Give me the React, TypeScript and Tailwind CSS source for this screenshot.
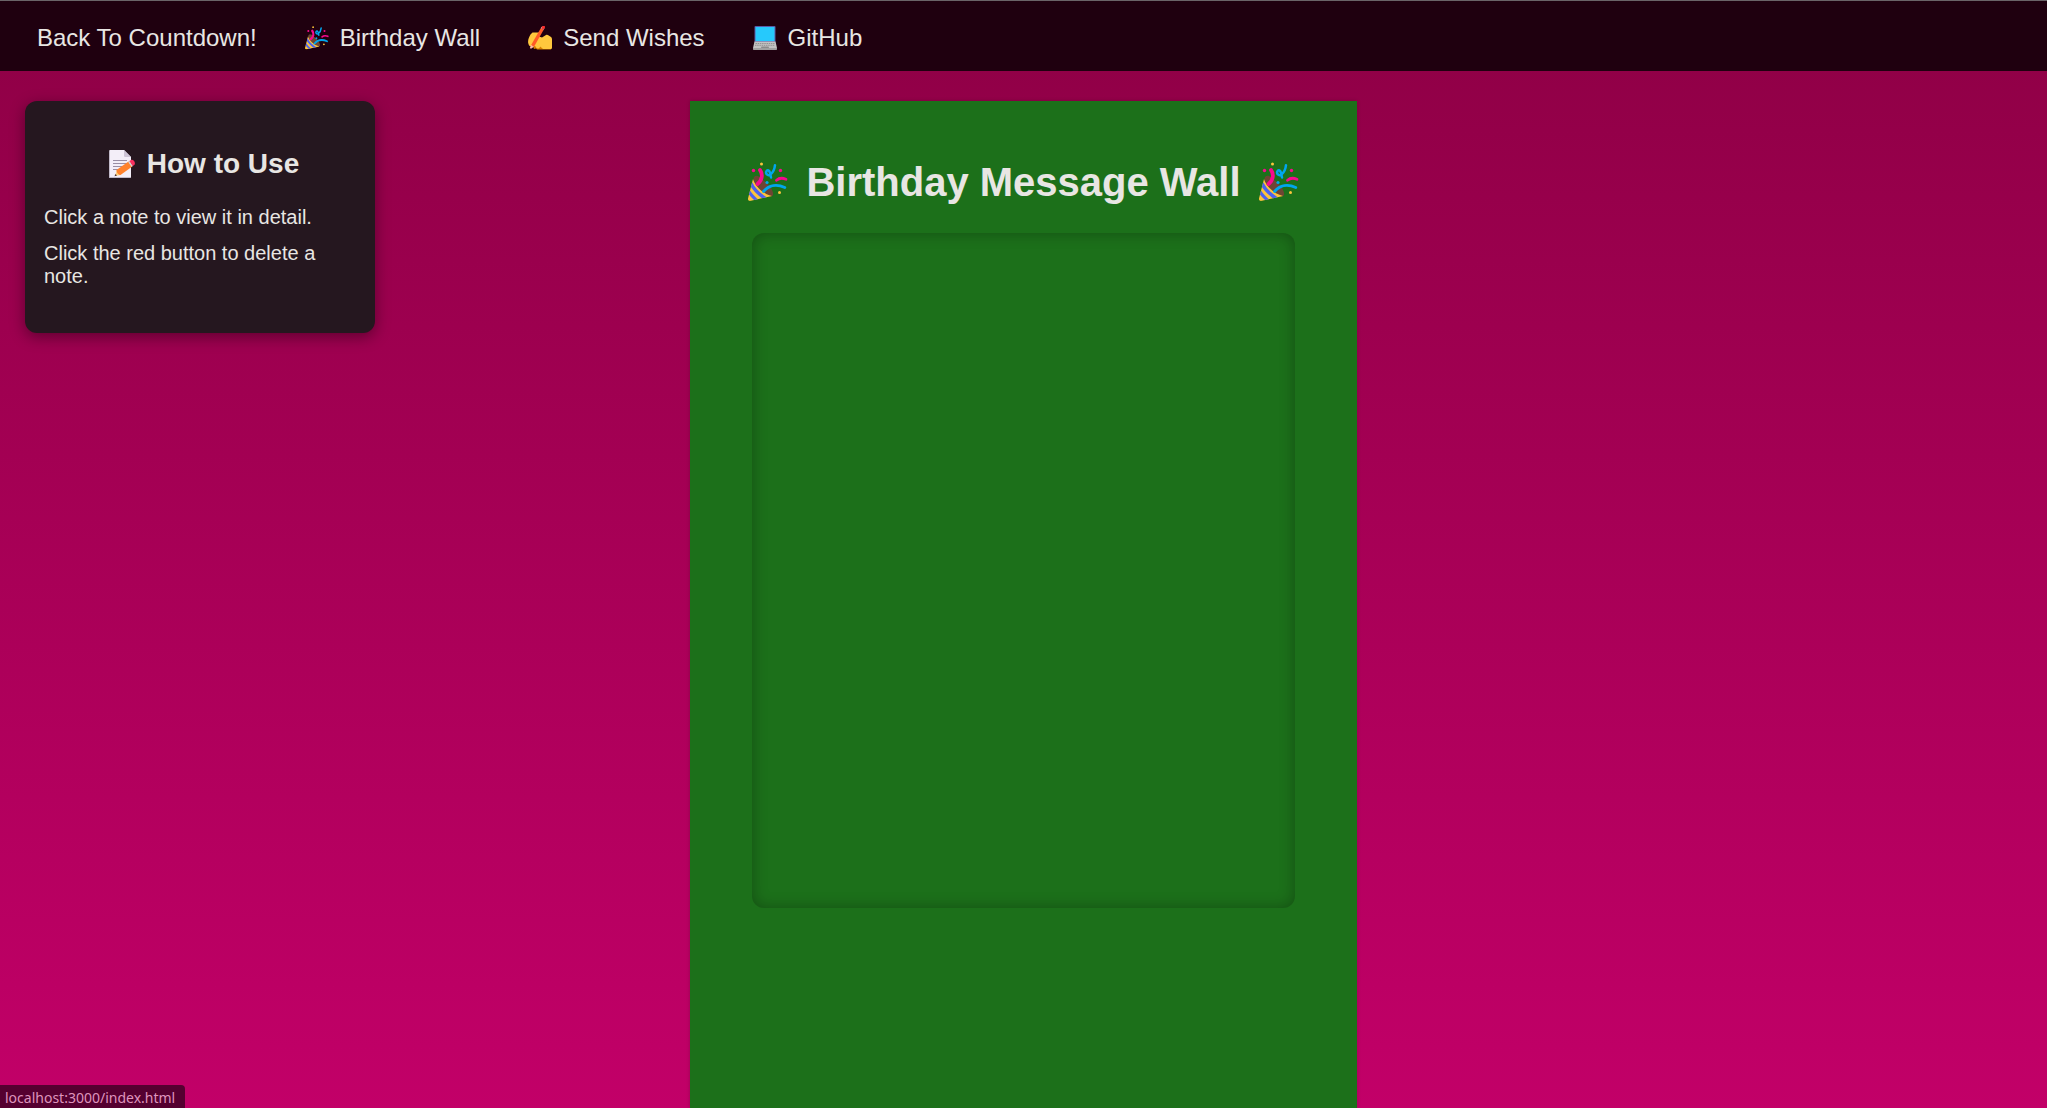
import { useId, type ReactNode } from "react";

type IconProps = { className?: string };

function PartyIcon({ className }: IconProps) {
  const cone = useId();
  return (
    <svg viewBox="0 0 40 40" className={className} aria-hidden="true" fill="none" strokeLinecap="round">
      <defs>
        <clipPath id={cone}>
          <path d="M5 17C7 24 15 32 24 34L3 38.800C1 39.200 -0.200 38.300 0 36.500Z" />
        </clipPath>
      </defs>
      <path d="M5.500 18C5 13 10 12 15 18C21 22 26 29 25 33C23 36 19 34.500 14 31C9 27 6 23 5.500 18Z" fill="#6d4534" />
      <g clipPath={`url(#${cone})`}>
        <rect x="-1" y="14" width="28" height="27" fill="#fcc43c" />
        <path d="M3 21.500C6 28 12 33 18 37" stroke="#4a62f0" strokeWidth="3.400" />
        <path d="M0.500 29C3 33 6 36 10 39.500" stroke="#4a62f0" strokeWidth="3.200" />
      </g>
      <path d="M12 8C15 12 14.500 18 9.500 22" stroke="#f70a8d" strokeWidth="3.800" />
      <path d="M28.500 18.300C31 16 35 16 38 17.200" stroke="#f70a8d" strokeWidth="2.800" />
      <path d="M15.500 29.500C21 23 29 22 36.800 25.500" stroke="#00a6ed" strokeWidth="2.900" />
      <path d="M27 3.200C26.500 8 25 10.500 22.500 12.500C19.500 14.500 17.200 11.500 18.500 9.200C20.500 6.500 22.500 10 23 15.500" stroke="#00a6ed" strokeWidth="2.500" />
      <circle cx="13.500" cy="2" r="1.500" fill="#fcc43c" />
      <circle cx="31.500" cy="30.500" r="1.500" fill="#fcc43c" />
      <circle cx="5.500" cy="8.500" r="1.700" fill="#f70a8d" />
      <circle cx="32.500" cy="8.500" r="1.700" fill="#f70a8d" />
      <circle cx="19" cy="20.500" r="1.600" fill="#00a6ed" />
    </svg>
  );
}

function WritingHandIcon({ className }: IconProps) {
  return (
    <svg viewBox="0 0 24 24" className={className} aria-hidden="true" fill="none">
      <path d="M5 20L9 18L12 21L15 19L23.500 21.500L23 23.500H9L8 22.500L6 23Z" fill="#d67d00" />
      <path d="M0.200 17C-0.300 14 1 11 2.500 8.500L4.500 6.500H11.500L11 10.500L14 11.500L18 9C19 8.500 19.500 8.600 20.300 9.200L23 11C23.800 11.800 24 12.500 24 13.500V21.500C24 22.700 23.500 23 22 23H15L12.500 20.800L10.500 22.500C8.500 22.800 8 21.500 7.200 20L3 20.500C1 20 0.500 18.500 0.200 17Z" fill="#ffc83d" />
      <path d="M14.200 3L4.500 20" stroke="#ff5a26" strokeWidth="3.400" />
      <path d="M15 1.600L14.200 3" stroke="#d3d3d3" strokeWidth="3.400" />
      <path d="M15.400 1.200L15.100 1.700" stroke="#f8312f" strokeWidth="3.200" strokeLinecap="round" />
      <path d="M3 19L6 20.700L3 22.800L1.900 22Z" fill="#ffb8a6" />
    </svg>
  );
}

function LaptopIcon({ className }: IconProps) {
  return (
    <svg viewBox="0 0 24 24" className={className} aria-hidden="true">
      <rect x="1.500" y="0" width="21" height="16.500" rx="1" fill="#5a5aa8" />
      <rect x="2.500" y="1" width="19" height="14" fill="#26c9fc" />
      <path d="M1.500 15.500H22.500L24 22H0Z" fill="#c2c2c2" />
      <path d="M2.500 17.500H21.500M2 19.300H22" stroke="#929292" strokeWidth="1" strokeDasharray="1.500 0.700" />
      <path d="M8.500 20.500H15.500L16 22H8Z" fill="#8b8b8b" />
      <path d="M0 22H24V23C24 23.600 23.600 24 23 24H1C0.400 24 0 23.600 0 23Z" fill="#a0a0a0" />
    </svg>
  );
}

function MemoIcon({ className }: IconProps) {
  return (
    <svg viewBox="0 0 26 28" className={className} aria-hidden="true">
      <path d="M1.500 0H15L22 7V26.500C22 27.500 21.500 28 20.500 28H1.500C0.500 28 0 27.500 0 26.500V1.500C0 0.500 0.500 0 1.500 0Z" fill="#f3eef8" />
      <path d="M0.500 1V27.500H21.500" stroke="#b4acbc" strokeWidth="0.800" fill="none" />
      <path d="M15 0V5.500C15 6.500 15.500 7 16.500 7H22Z" fill="#cdc4d6" />
      <path d="M4 10.500H18M4 13.500H18M4 16.500H14M4 19.500H9" stroke="#998ea4" strokeWidth="1" />
      <path d="M6 26L8 19.500L11.500 25Z" fill="#ffce7c" />
      <path d="M5.500 26.200L6.500 24L8 25.500Z" fill="#402a32" />
      <path d="M7.500 20L19.500 11.500L23.300 16.500L11.500 25C9.500 25 7.500 22.500 7.500 20Z" fill="#ff822d" />
      <path d="M19 11.800L20.500 10.800L24 15.800L22.700 17Z" fill="#d3d3d3" />
      <path d="M20.300 11L22 10C24 9 27 12.500 25.500 14.700L23.800 16Z" fill="#f8315f" />
    </svg>
  );
}

function NavLink({ href, icon, children }: { href: string; icon?: ReactNode; children: ReactNode }) {
  return (
    <a href={href} className="flex items-center gap-[11px] whitespace-nowrap">
      {icon}
      {children}
    </a>
  );
}

export default function App() {
  return (
    <div className="flex min-h-screen flex-col bg-linear-to-b from-[#8e0045] to-[#c20068] font-['Liberation_Sans',Arial,sans-serif] text-[#e8e6e3]">
      <nav className="flex flex-wrap items-center gap-x-12 border-t border-[#6a6468] bg-[#1f000f] px-[37px] pt-[19px] pb-[15px] text-2xl leading-9">
        <NavLink href="#countdown">Back To Countdown!</NavLink>
        <NavLink href="#wall" icon={<PartyIcon className="size-6" />}>Birthday Wall</NavLink>
        <NavLink href="#send" icon={<WritingHandIcon className="size-6" />}>Send Wishes</NavLink>
        <NavLink href="#github" icon={<LaptopIcon className="size-6" />}>GitHub</NavLink>
      </nav>

      <div className="grid flex-1 grid-cols-[1fr_minmax(0,667px)_1fr] pt-[30px]">
        <aside className="ml-[25px] w-full max-w-[350px] self-start rounded-xl bg-[#25171f] px-[19px] pt-[47px] pb-[45px] shadow-[0_4px_15px_rgba(0,0,0,0.4)]">
          <h2 className="flex items-center justify-center gap-3 pl-2 text-[28px] leading-8 font-bold">
            <MemoIcon className="h-7 w-[26px]" />
            How to Use
          </h2>
          <p className="mt-[26px] text-xl leading-[23px]">Click a note to view it in detail.</p>
          <p className="mt-[13px] text-xl leading-[23px]">Click the red button to delete a note.</p>
        </aside>

        <main className="bg-[#1c701a] px-[62px] pt-[58px] shadow-[0_0_4px_rgba(0,0,0,0.2)]">
          <h1 className="-mx-8 flex items-center justify-center gap-[18px] text-[40px] leading-[46px] font-bold whitespace-nowrap">
            <PartyIcon className="size-10" />
            Birthday Message Wall
            <PartyIcon className="size-10" />
          </h1>
          <section
            aria-label="Messages"
            className="mt-7 h-[675px] rounded-xl shadow-[inset_0_0_15px_rgba(0,0,0,0.3)]"
          />
        </main>
      </div>

      <div className="fixed bottom-0 left-0 rounded-tr bg-[#550030] pt-[3px] pr-[10px] pl-[5px] font-['Noto_Sans',sans-serif] text-sm leading-5 text-[#df94bd]">
        localhost:3000/index.html
      </div>
    </div>
  );
}
